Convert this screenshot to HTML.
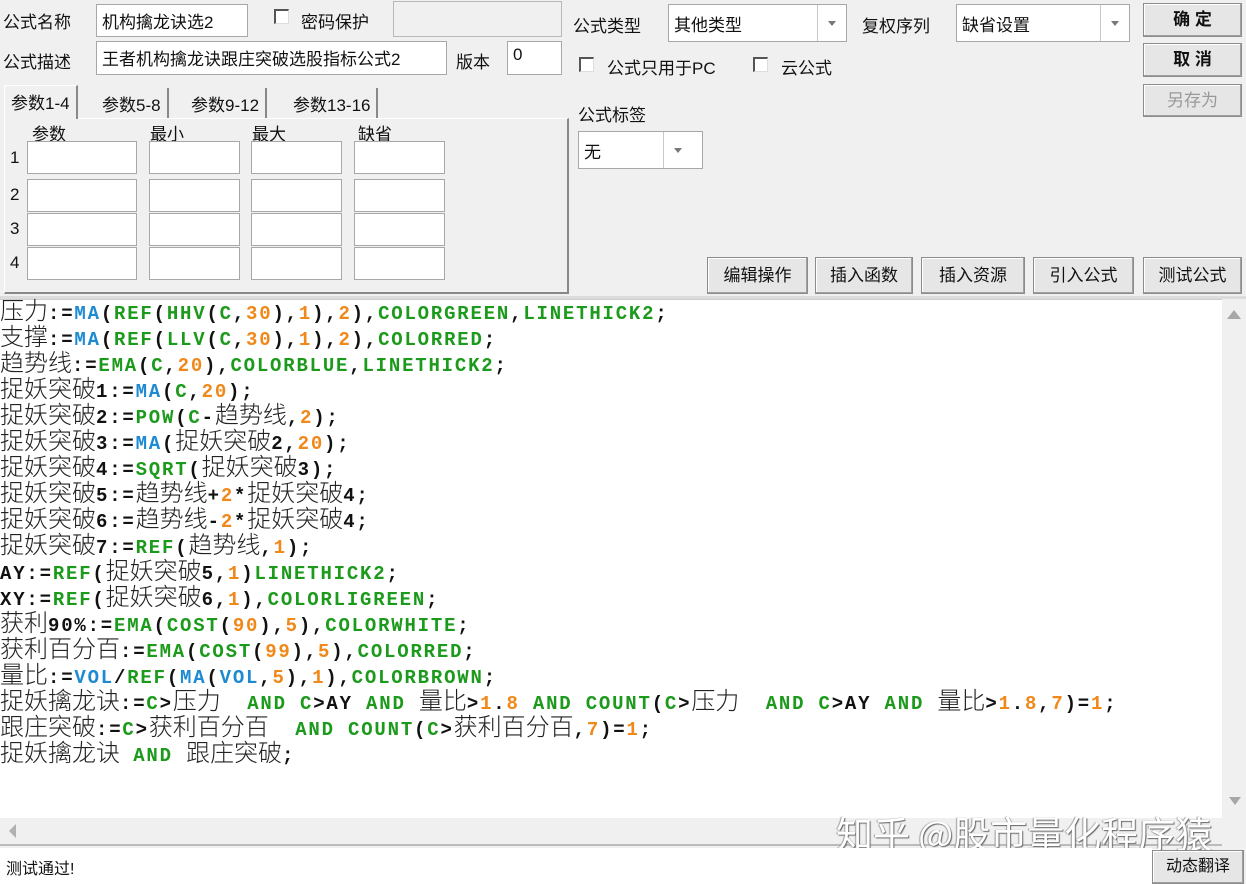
<!DOCTYPE html>
<html><head><meta charset="utf-8"><style>
*{margin:0;padding:0;box-sizing:border-box}
body{width:1246px;height:884px;background:#f0f0f0;position:relative;overflow:hidden;font-family:"Liberation Sans","Noto Sans CJK SC",sans-serif;font-size:17px;color:#111}
.a{position:absolute}
.inp{position:absolute;background:#fff;border:1px solid #a8a8a8;font-size:17px;padding:3px 5px;white-space:nowrap;overflow:hidden}
.lbl{position:absolute;font-size:17px;white-space:nowrap}
.cb{position:absolute;width:15px;height:15px;border:2px solid #555;border-right:1px solid #ddd;border-bottom:1px solid #ddd;background:#fff}
.btn{position:absolute;background:#e6e6e6;border:1px solid #8c8c8c;box-shadow:inset -1px -1px 0 #a0a0a0,inset 1px 1px 0 #fff;font-size:17px;text-align:center;white-space:nowrap}
.sel{position:absolute;background:#fff;border:1px solid #a8a8a8;font-size:17px;padding:6px 5px}
.sel .dd{position:absolute;right:0;top:0;bottom:0;width:29px;border-left:1px solid #c8c8c8}
.sel .dd:after{content:"";position:absolute;left:10px;top:16px;border:4px solid transparent;border-top:5px solid #777}
.tab{position:absolute;top:88px;height:30px;font-size:17px;padding:3px 6px;border-right:2px solid #888;white-space:nowrap}
#code{position:absolute;left:0;top:299px;width:1222px;height:519px;background:#fff;border-top:1px solid #ccc;padding-top:0}
#code .in{position:relative;top:-4px}
.l{height:26px;line-height:26px;white-space:pre;font-family:"Liberation Mono",monospace;font-weight:bold;font-size:19px;letter-spacing:1.8px;color:#111}
.l i{font-style:normal;font-family:"Noto Sans CJK SC",sans-serif;font-weight:300;font-size:24px;letter-spacing:0;color:#222}
.g{color:#1c9a1c}.b{color:#1d8ad2}.o{color:#f0881a}
</style></head><body>
<div class="lbl" style="left:3px;top:8px">公式名称</div>
<div class="inp" style="left:96px;top:4px;width:152px;height:33px">机构擒龙诀选2</div>
<div class="cb" style="left:274px;top:9px"></div>
<div class="lbl" style="left:301px;top:8px">密码保护</div>
<div class="a" style="left:393px;top:1px;width:169px;height:36px;border:1px solid #b8b8b8;background:#f0f0f0"></div>
<div class="lbl" style="left:3px;top:48px">公式描述</div>
<div class="inp" style="left:96px;top:41px;width:351px;height:34px">王者机构擒龙诀跟庄突破选股指标公式2</div>
<div class="lbl" style="left:456px;top:48px">版本</div>
<div class="inp" style="left:507px;top:41px;width:55px;height:34px">0</div>

<div class="a" style="left:4px;top:118px;width:565px;height:176px;border:1px solid #fff;border-right:2px solid #888;border-bottom:2px solid #888"></div>
<div class="tab" style="left:4px;top:85px;height:34px;background:#f0f0f0;border-left:1px solid #fff;border-top:1px solid #fff">参数1-4</div>
<div class="tab" style="left:96px">参数5-8</div>
<div class="tab" style="left:185px">参数9-12</div>
<div class="tab" style="left:287px">参数13-16</div>
<div class="lbl" style="left:32px;top:120px">参数</div>
<div class="lbl" style="left:150px;top:120px">最小</div>
<div class="lbl" style="left:252px;top:120px">最大</div>
<div class="lbl" style="left:358px;top:120px">缺省</div>
<div class="lbl" style="left:10px;top:148px">1</div><div class="lbl" style="left:10px;top:185px">2</div><div class="lbl" style="left:10px;top:219px">3</div><div class="lbl" style="left:10px;top:253px">4</div>
<div class="inp" style="left:27px;top:141px;width:110px;height:33px"></div><div class="inp" style="left:149px;top:141px;width:91px;height:33px"></div><div class="inp" style="left:251px;top:141px;width:91px;height:33px"></div><div class="inp" style="left:354px;top:141px;width:91px;height:33px"></div>
<div class="inp" style="left:27px;top:179px;width:110px;height:33px"></div><div class="inp" style="left:149px;top:179px;width:91px;height:33px"></div><div class="inp" style="left:251px;top:179px;width:91px;height:33px"></div><div class="inp" style="left:354px;top:179px;width:91px;height:33px"></div>
<div class="inp" style="left:27px;top:213px;width:110px;height:33px"></div><div class="inp" style="left:149px;top:213px;width:91px;height:33px"></div><div class="inp" style="left:251px;top:213px;width:91px;height:33px"></div><div class="inp" style="left:354px;top:213px;width:91px;height:33px"></div>
<div class="inp" style="left:27px;top:247px;width:110px;height:33px"></div><div class="inp" style="left:149px;top:247px;width:91px;height:33px"></div><div class="inp" style="left:251px;top:247px;width:91px;height:33px"></div><div class="inp" style="left:354px;top:247px;width:91px;height:33px"></div>

<div class="lbl" style="left:573px;top:12px">公式类型</div>
<div class="sel" style="left:668px;top:4px;width:179px;height:38px">其他类型<div class="dd"></div></div>
<div class="lbl" style="left:862px;top:12px">复权序列</div>
<div class="sel" style="left:956px;top:4px;width:174px;height:38px">缺省设置<div class="dd"></div></div>
<div class="btn" style="left:1143px;top:3px;width:99px;height:34px;line-height:32px;font-weight:bold">确 定</div>
<div class="btn" style="left:1143px;top:43px;width:99px;height:34px;line-height:32px;font-weight:bold">取 消</div>
<div class="btn" style="left:1143px;top:84px;width:99px;height:33px;line-height:31px;color:#999">另存为</div>
<div class="cb" style="left:579px;top:57px"></div>
<div class="lbl" style="left:607px;top:54px">公式只用于PC</div>
<div class="cb" style="left:753px;top:57px"></div>
<div class="lbl" style="left:781px;top:54px">云公式</div>
<div class="lbl" style="left:578px;top:101px">公式标签</div>
<div class="sel" style="left:578px;top:131px;width:125px;height:38px">无<div class="dd" style="width:39px"><span></span></div></div>
<div class="btn" style="left:707px;top:257px;width:101px;height:37px;line-height:35px">编辑操作</div>
<div class="btn" style="left:815px;top:257px;width:98px;height:37px;line-height:35px">插入函数</div>
<div class="btn" style="left:921px;top:257px;width:104px;height:37px;line-height:35px">插入资源</div>
<div class="btn" style="left:1033px;top:257px;width:101px;height:37px;line-height:35px">引入公式</div>
<div class="btn" style="left:1143px;top:257px;width:99px;height:37px;line-height:35px">测试公式</div>

<div class="a" style="left:0;top:296px;width:1246px;height:3px;background:#dcdcdc"></div>
<div id="code"><div class="in">
<div class="l"><i>压力</i>:=<span class="b">MA</span>(<span class="g">REF</span>(<span class="g">HHV</span>(<span class="g">C</span>,<span class="o">30</span>),<span class="o">1</span>),<span class="o">2</span>),<span class="g">COLORGREEN</span>,<span class="g">LINETHICK2</span>;</div>
<div class="l"><i>支撑</i>:=<span class="b">MA</span>(<span class="g">REF</span>(<span class="g">LLV</span>(<span class="g">C</span>,<span class="o">30</span>),<span class="o">1</span>),<span class="o">2</span>),<span class="g">COLORRED</span>;</div>
<div class="l"><i>趋势线</i>:=<span class="g">EMA</span>(<span class="g">C</span>,<span class="o">20</span>),<span class="g">COLORBLUE</span>,<span class="g">LINETHICK2</span>;</div>
<div class="l"><i>捉妖突破</i>1:=<span class="b">MA</span>(<span class="g">C</span>,<span class="o">20</span>);</div>
<div class="l"><i>捉妖突破</i>2:=<span class="g">POW</span>(<span class="g">C</span>-<i>趋势线</i>,<span class="o">2</span>);</div>
<div class="l"><i>捉妖突破</i>3:=<span class="b">MA</span>(<i>捉妖突破</i>2,<span class="o">20</span>);</div>
<div class="l"><i>捉妖突破</i>4:=<span class="g">SQRT</span>(<i>捉妖突破</i>3);</div>
<div class="l"><i>捉妖突破</i>5:=<i>趋势线</i>+<span class="o">2</span>*<i>捉妖突破</i>4;</div>
<div class="l"><i>捉妖突破</i>6:=<i>趋势线</i>-<span class="o">2</span>*<i>捉妖突破</i>4;</div>
<div class="l"><i>捉妖突破</i>7:=<span class="g">REF</span>(<i>趋势线</i>,<span class="o">1</span>);</div>
<div class="l">AY:=<span class="g">REF</span>(<i>捉妖突破</i>5,<span class="o">1</span>)<span class="g">LINETHICK2</span>;</div>
<div class="l">XY:=<span class="g">REF</span>(<i>捉妖突破</i>6,<span class="o">1</span>),<span class="g">COLORLIGREEN</span>;</div>
<div class="l"><i>获利</i>90%:=<span class="g">EMA</span>(<span class="g">COST</span>(<span class="o">90</span>),<span class="o">5</span>),<span class="g">COLORWHITE</span>;</div>
<div class="l"><i>获利百分百</i>:=<span class="g">EMA</span>(<span class="g">COST</span>(<span class="o">99</span>),<span class="o">5</span>),<span class="g">COLORRED</span>;</div>
<div class="l"><i>量比</i>:=<span class="b">VOL</span>/<span class="g">REF</span>(<span class="b">MA</span>(<span class="b">VOL</span>,<span class="o">5</span>),<span class="o">1</span>),<span class="g">COLORBROWN</span>;</div>
<div class="l"><i>捉妖擒龙诀</i>:=<span class="g">C</span>&gt;<i>压力</i>  <span class="g">AND</span> <span class="g">C</span>&gt;AY <span class="g">AND</span> <i>量比</i>&gt;<span class="o">1</span>.<span class="o">8</span> <span class="g">AND</span> <span class="g">COUNT</span>(<span class="g">C</span>&gt;<i>压力</i>  <span class="g">AND</span> <span class="g">C</span>&gt;AY <span class="g">AND</span> <i>量比</i>&gt;<span class="o">1</span>.<span class="o">8</span>,<span class="o">7</span>)=<span class="o">1</span>;</div>
<div class="l"><i>跟庄突破</i>:=<span class="g">C</span>&gt;<i>获利百分百</i>  <span class="g">AND</span> <span class="g">COUNT</span>(<span class="g">C</span>&gt;<i>获利百分百</i>,<span class="o">7</span>)=<span class="o">1</span>;</div>
<div class="l"><i>捉妖擒龙诀</i> <span class="g">AND</span> <i>跟庄突破</i>;</div>
</div></div>
<div class="a" style="left:1222px;top:299px;width:24px;height:519px;background:#f0f0f0"></div>
<div class="a" style="left:1227px;top:310px;border:7px solid transparent;border-bottom:9px solid #a8a8a8;border-top:0"></div>
<div class="a" style="left:1229px;top:797px;border:6px solid transparent;border-top:8px solid #a8a8a8;border-bottom:0"></div>
<div class="a" style="left:0;top:818px;width:1222px;height:28px;background:#f0f0f0;border-bottom:2px solid #bbb"></div>
<div class="a" style="left:9px;top:824px;border:7px solid transparent;border-right:7px solid #b0b0b0;border-left:0"></div>
<div class="a" style="left:836px;top:805px;font-size:37px;color:#fff;text-shadow:1px 1px 1px #666,-1px 0 1px #999;white-space:nowrap;font-family:'Noto Sans CJK SC',sans-serif">知乎 @股市量化程序猿</div>
<div class="a" style="left:0;top:848px;width:1152px;height:36px;background:#fff"></div>
<div class="lbl" style="left:6px;top:855px;font-size:16px">测试通过!</div>
<div class="btn" style="left:1152px;top:850px;width:92px;height:34px;line-height:32px;font-size:16px">动态翻译</div>
</body></html>
